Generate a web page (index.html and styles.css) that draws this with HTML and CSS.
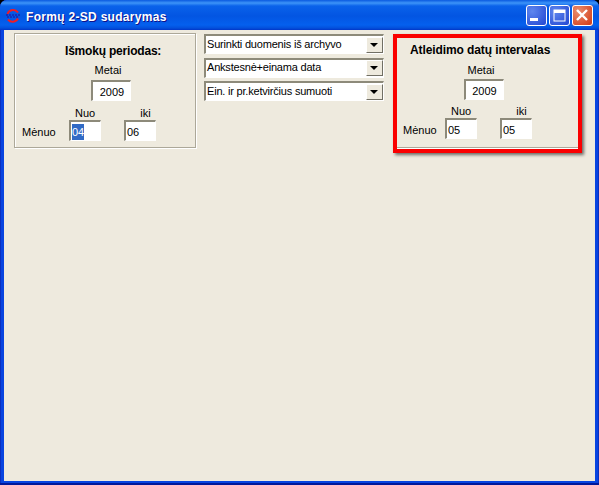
FILE: index.html
```html
<!DOCTYPE html>
<html lang="lt">
<head>
    <meta charset="UTF-8">
    <title>Formų 2-SD sudarymas</title>
    <link rel="stylesheet" href="styles.css">
</head>
<body>
    <div class="window">
        <div class="titlebar">
            <svg class="app-icon" width="16" height="16" viewBox="0 0 16 16">
                <path d="M2.5 6 A6 6 0 0 1 13 4.5" fill="none" stroke="#f01c24" stroke-width="2"/>
                <path d="M13 10.5 A6 6 0 0 1 3 11.5" fill="none" stroke="#f01c24" stroke-width="2"/>
                <path d="M1 7 H15 M2 9 H14" stroke="#1426b8" stroke-width="1.4" stroke-dasharray="2 1"/>
            </svg>
            <span class="title">Formų 2-SD sudarymas</span>
            <div class="caption-buttons">
                <div class="cap-btn">
                    <svg width="21" height="21" viewBox="0 0 21 21"><rect x="4" y="13" width="8" height="3" fill="#fff"/></svg>
                </div>
                <div class="cap-btn">
                    <svg width="21" height="21" viewBox="0 0 21 21"><rect x="5" y="5" width="11" height="11" fill="none" stroke="#fff"/><rect x="5" y="5" width="11" height="3" fill="#fff"/></svg>
                </div>
                <div class="cap-btn close">
                    <svg width="21" height="21" viewBox="0 0 21 21"><path d="M5 5 L15 15 M15 5 L5 15" stroke="#fff" stroke-width="2.4"/></svg>
                </div>
            </div>
        </div>
        <div class="client">
            <div class="panel left-panel">
                <div class="panel-title">Išmokų periodas:</div>
                <div class="label center">Metai</div>
                <div class="center year-row"><div class="field year">2009</div></div>
                <div class="heads">
                    <span>Nuo</span>
                    <span>iki</span>
                </div>
                <div class="month-row">
                    <span class="label">Mėnuo</span>
                    <div class="field month"><span class="selected">04</span></div>
                    <div class="field month">06</div>
                </div>
            </div>
            <div class="combos">
                <div class="combo"><span class="combo-text">Surinkti duomenis iš archyvo</span><div class="combo-btn"></div></div>
                <div class="combo"><span class="combo-text">Ankstesnė+einama data</span><div class="combo-btn"></div></div>
                <div class="combo"><span class="combo-text">Ein. ir pr.ketvirčius sumuoti</span><div class="combo-btn"></div></div>
            </div>
            <div class="highlight">
                <div class="panel right-panel">
                    <div class="panel-title">Atleidimo datų intervalas</div>
                    <div class="label center">Metai</div>
                    <div class="center year-row"><div class="field year">2009</div></div>
                    <div class="heads">
                        <span>Nuo</span>
                        <span>iki</span>
                    </div>
                    <div class="month-row">
                        <span class="label">Mėnuo</span>
                        <div class="field month">05</div>
                        <div class="field month">05</div>
                    </div>
                </div>
            </div>
        </div>
    </div>
</body>
</html>
```

FILE: styles.css
```css
body {
    margin: 0;
    padding: 0;
    background: #000;
    font-family: 'Liberation Sans', Arial, sans-serif;
    font-size: 11px;
    color: #000;
}
.window {
    width: 599px;
    height: 485px;
    box-sizing: border-box;
    display: flex;
    flex-direction: column;
    background: #0844e0;
    border-radius: 7px 7px 0 0;
    overflow: hidden;
    box-shadow: inset 0 -2px 0 #00189a, inset -1px 0 0 #0a2fc0, inset 1px 0 0 #0a2fc0;
}
.titlebar {
    height: 30px;
    flex: none;
    display: flex;
    align-items: center;
    padding: 0 6px 0 5px;
    background: linear-gradient(to bottom, #0a5ae0 0, #3d94f8 3px, #0a62ea 6px, #0355e2 16px, #0460ee 25px, #0350dc 28px, #0136c8 30px);
}
.app-icon {
    flex: none;
    margin-top: 1px;
}
.title {
    margin: 4px 0 0 5px;
    color: #fff;
    font-weight: bold;
    font-size: 12px;
    letter-spacing: 0.3px;
    text-shadow: 1px 1px 0 #0f1089;
}
.caption-buttons {
    margin-left: auto;
    margin-top: 1px;
    display: flex;
    gap: 2px;
}
.cap-btn {
    width: 21px;
    height: 21px;
    border-radius: 3px;
    outline: 1px solid #fff;
    outline-offset: -1px;
    background: radial-gradient(circle at 30% 30%, #5e86ee, #2a4fd6 80%);
}
.cap-btn svg {
    display: block;
}
.cap-btn.close {
    background: radial-gradient(circle at 30% 30%, #ea8f70, #d5431f 80%);
}
.client {
    flex: 1;
    margin: 0 4px 4px 4px;
    padding: 3px 0 0 10px;
    background: #eeeade;
    display: flex;
    align-items: flex-start;
}
.panel {
    box-sizing: border-box;
    border: 1px solid #aca899;
    box-shadow: 1px 1px 0 #fff, inset 1px 1px 0 #fff;
}
.left-panel {
    width: 182px;
    height: 115px;
    padding-top: 10px;
}
.panel-title {
    font-size: 12px;
    font-weight: bold;
    line-height: 14px;
}
.left-panel .panel-title {
    padding-left: 50px;
    letter-spacing: -0.2px;
}
.center {
    display: flex;
    justify-content: center;
    text-align: center;
}
.label {
    line-height: 14px;
}
.left-panel .label.center {
    display: block;
    margin: 5px 0 3px;
    padding-left: 6px;
}
.left-panel .year-row {
    padding-left: 12px;
}
.field {
    box-sizing: border-box;
    height: 21px;
    padding: 3px 0 0 1px;
    line-height: 14px;
    background: #fff;
    border-style: solid;
    border-width: 2px 1px 1px 2px;
    border-color: #8d8a7a #fff #fff #8d8a7a;
}
.year {
    width: 40px;
}
.month {
    width: 32px;
}
.selected {
    display: inline-block;
    margin-top: -1px;
    line-height: 16px;
    background: #316ac5;
    color: #fff;
}
.heads {
    display: flex;
    line-height: 14px;
    margin-top: 5px;
}
.left-panel .heads {
    padding-left: 60px;
    gap: 45px;
}
.month-row {
    display: flex;
    align-items: center;
}
.left-panel .month-row {
    padding-left: 7px;
}
.month-row .label {
    width: 47px;
    flex: none;
    padding-top: 2px;
}
.month-row .field + .field {
    margin-left: 23px;
}
.combos {
    width: 180px;
    margin: 1px 0 0 8px;
    display: flex;
    flex-direction: column;
    gap: 3.5px;
}
.combo {
    box-sizing: border-box;
    height: 20px;
    display: flex;
    align-items: center;
    background: #fff;
    border-style: solid;
    border-width: 2px 1px 1px 2px;
    border-color: #8d8a7a #fff #fff #8d8a7a;
}
.combo-text {
    flex: 1;
    padding: 0 0 2px 1px;
    letter-spacing: -0.2px;
}
.combo-btn {
    width: 17px;
    height: 16px;
    position: relative;
    background: #eeeade;
    box-sizing: border-box;
    border: 1px solid;
    border-color: #fff #716f64 #716f64 #fff;
}
.combo-btn::after {
    content: "";
    position: absolute;
    left: 3px;
    top: 5px;
    border-style: solid;
    border-width: 4px 4px 0 4px;
    border-color: #000 transparent transparent transparent;
}
.highlight {
    box-sizing: border-box;
    width: 189px;
    height: 119px;
    margin: 1px 0 0 9px;
    border: 4px solid #fa0000;
    box-shadow: 2px 2px 3px rgba(0, 0, 0, 0.55);
}
.right-panel {
    height: 110px;
    border-width: 0 0 1px 0;
    padding-top: 5px;
    box-shadow: 0 1px 0 #fff;
}
.right-panel .panel-title {
    padding-left: 13px;
    letter-spacing: -0.1px;
}
.right-panel .label.center {
    display: block;
    margin: 6px 0 2px;
    padding-right: 13px;
}
.right-panel .year-row {
    padding-right: 8px;
}
.right-panel .heads {
    padding-left: 54px;
    gap: 45px;
    line-height: 13px;
}
.right-panel .month-row {
    padding-left: 6px;
}
.right-panel .month-row .label {
    width: 42px;
}
```
